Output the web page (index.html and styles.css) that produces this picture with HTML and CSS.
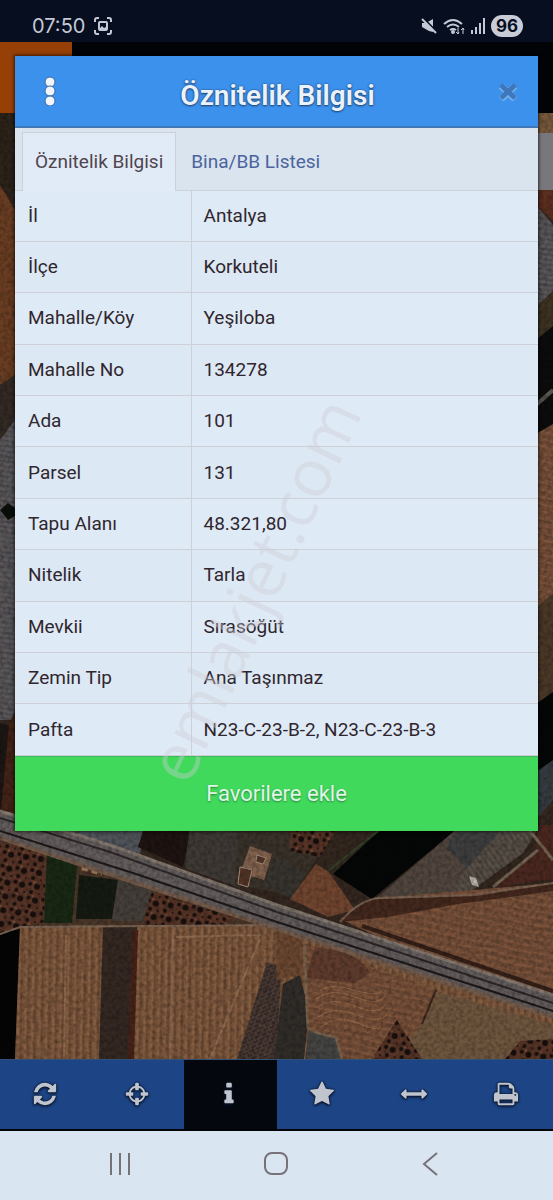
FILE: index.html
```html
<!DOCTYPE html>
<html lang="tr">
<head>
  <meta charset="UTF-8" />
  <meta name="viewport" content="width=device-width, initial-scale=1.0"/>
  <title>Öznitelik Bilgisi</title>
  <link rel="stylesheet" href="styles.css">
</head>
<body>
  <header class="status-bar">
    <span class="clock">07:50</span>
    <svg class="shot-icon" viewBox="0 0 18 18" width="18" height="18" fill="none" stroke="currentColor" stroke-width="2">
      <path d="M1 5V3q0-2 2-2h2M13 1h2q2 0 2 2v2M17 13v2q0 2-2 2h-2M5 17H3q-2 0-2-2v-2"/>
      <rect x="5" y="5" width="8" height="8" rx="1"/>
      <path d="M5 12l3-3 2 2 2-1v3H5z" fill="currentColor" stroke="none"/>
    </svg>
    <div class="status-right">
      <svg viewBox="0 0 16 16" width="16" height="16" fill="currentColor">
        <path d="M1 5h4l7-4v13l-4-1-7-4z"/>
        <path d="M2 0l14 14" stroke="#070e1f" stroke-width="2"/>
        <path d="M1 1l14 14" stroke="currentColor" stroke-width="2"/>
      </svg>
      <svg viewBox="0 0 22 17" width="22" height="17" fill="none" stroke="currentColor" stroke-width="2">
        <path d="M1 6q9-8 18 0M4 9q6-5 12 0M7 12q3-2 6 0"/>
        <circle cx="10" cy="14" r="1"/>
        <path d="M15 10v6M13 14l2 2 1-2M20 16v-6M18 12l2-2 1 2" stroke-width="1"/>
      </svg>
      <svg viewBox="0 0 14 16" width="14" height="16" fill="currentColor">
        <path d="M0 12h2v4H0zM4 9h2v7H4zM8 5h2v11H8zM12 0h2v16h-2z"/>
      </svg>
      <span class="battery">96</span>
    </div>
  </header>

  <main class="map">
    <svg class="map-canvas" viewBox="0 42 553 1017" preserveAspectRatio="xMidYMin slice" aria-hidden="true">
      <defs>
        <pattern id="furrow" width="7" height="40" patternUnits="userSpaceOnUse" patternTransform="rotate(1)">
          <rect width="7" height="40" fill="#7a553b"/>
          <path d="M1 0v40" stroke="#93694b"/>
          <path d="M4 0v40" stroke="#5f402c"/>
        </pattern>
        <pattern id="furrow-h" width="60" height="7" patternUnits="userSpaceOnUse" patternTransform="rotate(12)">
          <rect width="60" height="7" fill="#744e38"/>
          <path d="M0 2q15-2 30 0t30 0" stroke="#86593e" fill="none"/>
          <path d="M0 5h60" stroke="#684532"/>
        </pattern>
        <pattern id="rows" width="5" height="20" patternUnits="userSpaceOnUse" patternTransform="rotate(-35)">
          <rect width="5" height="20" fill="#504840"/>
          <path d="M1 0v20" stroke="#645c53"/>
        </pattern>
        <pattern id="stripes" width="20" height="5" patternUnits="userSpaceOnUse" patternTransform="rotate(8)">
          <rect width="20" height="5" fill="#5b585b"/>
          <path d="M0 1h20" stroke="#454246"/>
        </pattern>
        <pattern id="shrubs" width="15" height="14" patternUnits="userSpaceOnUse" patternTransform="rotate(8)">
          <rect width="15" height="14" fill="#573426"/>
          <g fill="#170f0d"><circle cx="3" cy="3" r="2"/><circle cx="10" cy="5" r="3"/><circle cx="5" cy="11" r="2"/><circle cx="13" cy="12" r="1"/></g>
          <circle cx="7" cy="1" r="1" fill="#825545"/>
        </pattern>
        <pattern id="orchard" width="5" height="5" patternUnits="userSpaceOnUse" patternTransform="rotate(22)">
          <rect width="5" height="5" fill="#4b3b35"/>
          <path d="M0 1h3M2 4h2" stroke="#231b1a"/>
        </pattern>
        <filter id="grain" x="0" y="0" width="100%" height="100%">
          <feTurbulence type="fractalNoise" baseFrequency=".25" numOctaves="3" seed="4"/>
          <feColorMatrix values="0 0 0 0 0  0 0 0 0 0  0 0 0 0 0  1.4 0 0 0 -.5"/>
        </filter>
      </defs>
      <rect y="42" width="553" height="1017" fill="#33271f"/>

      <!-- west edge -->
      <path d="M0 113h20v80H0z" fill="#2c2319"/>
      <path d="M0 185l15 25v165L0 388z" fill="#693d22"/>
      <path d="M0 385l15-10v50L0 450z" fill="#332a24"/>
      <path d="M0 440l15-20v300H0z" fill="url(#stripes)"/>
      <path d="M0 510l8-7 7 5v8l-7 4z" fill="#0a0f0b"/>
      <path d="M0 723l12 3v85H0z" fill="#1d1714"/>
      <path d="M9 725l8-20v115H0z" fill="#442318"/>

      <!-- east edge -->
      <path d="M536 113h17v80h-17z" fill="#76583c"/>
      <path d="M536 190h17v30l-17-15z" fill="#5b2f20"/>
      <path d="M536 205l17 20v66l-17 16z" fill="url(#stripes)"/>
      <path d="M536 306l17-14v35l-17 14z" fill="#3c3223"/>
      <path d="M536 340l17-14v98l-17 12z" fill="#0b0c0b"/>
      <path d="M536 405l17-15" stroke="#5a5650" stroke-width="4"/>
      <path d="M536 434l17-10v170l-17 14z" fill="url(#furrow-h)"/>
      <path d="M536 608l17-14v98l-17 12z" fill="#4a3827"/>
      <path d="M536 704l17-12v70l-17 10z" fill="#050606"/>
      <path d="M536 772l17-12v40l-17 20z" fill="#353c40"/>

      <!-- plots north of the road -->
      <path d="M15 825h130l-5 30z" fill="#50545a"/>
      <path d="M145 825h46l-8 42-45-20z" fill="#1e1411"/>
      <path d="M190 825h60l-10 63-55-20z" fill="#3e3934"/>
      <path d="M238 825h100l-45 70-58-10z" fill="#39322a"/>
      <path d="M290 827h48l-18 30-30-6z" fill="url(#shrubs)"/>
      <path d="M250 846l22 8-8 26-24-7z" fill="#80614d"/>
      <path d="M240 867l12 3-4 17-10-3zM257 855l9 3-3 6-7-2z" fill="#523326" stroke="#a4917e"/>
      <path d="M276 859l30 14-14 26-30-14z" fill="#37342f"/>
      <path d="M382 828h76l-86 71-39-25z" fill="#050706"/>
      <path d="M382 828l-54 43" stroke="#304327" stroke-width="2"/>
      <path d="M458 828l-85 73 74-5 24-27-20-27z" fill="#51463e"/>
      <path d="M458 828l-12 20 21 20 36-40z" fill="#3f3e3f"/>
      <path d="M503 828h35l-15 25-60 44h-16l20-29z" fill="url(#rows)"/>
      <path d="M538 825h15v54l-56 8 39-35z" fill="#4a2820"/>
      <path d="M530 831l23 29M538 850l-45 37" stroke="#746352" stroke-width="3"/>
      <path d="M469 876l7 2 3 9-7-2z" fill="#b7b2a7"/>
      <path d="M316 864l13 8 26 38-27 7-38-18z" fill="#70452f"/>
      <path d="M340 919l30-20 183-16v119L385 940z" fill="url(#furrow-h)"/>
      <path d="M340 922q20-23 40-23l97-3 76-12v7l-95 13-70 13z" fill="#43281d"/>
      <path d="M340 922q20-23 40-24l90-3 83-12" fill="none" stroke="#796151" stroke-width="2"/>
      <path d="M362 926l191 65" stroke="#342018" stroke-width="4"/>

      <!-- plots south of the road -->
      <path d="M0 836l133 44 140 46-10 4-263 5z" fill="#4a3629"/>
      <path d="M0 842l46 10-2 70-44 11z" fill="url(#shrubs)"/>
      <path d="M47 854l30 12-5 57H44z" fill="#192814"/>
      <path d="M79 875l39 5-6 39H76z" fill="#151b12"/>
      <path d="M118 880l34 11-10 30h-30z" fill="#453f3a"/>
      <path d="M152 891l83 27-14 9h-79z" fill="url(#shrubs)"/>
      <path d="M82 868l20 6" stroke="#9b7758" stroke-width="4" stroke-dasharray="6 4"/>
      <path d="M0 932l20-3-5 130H0z" fill="#050505"/>
      <path d="M20 926l257-1 276 90v44H15z" fill="url(#furrow)"/>
      <path d="M103 927h34l-4 132h-34z" fill="#342822"/>
      <path d="M135 930l-4 129" stroke="#462319" stroke-width="6"/>
      <path d="M66 935l-2 124M173 930l-3 129M176 937l85-2M260 939l-50 120" stroke="#8c684d" stroke-width="2" fill="none"/>
      <path d="M267 962l14 5-4 92h-40z" fill="url(#orchard)"/>
      <path d="M277 925l29 18-6 32-24 5z" fill="#6a4730"/>
      <path d="M283 984l17-9 9 38-5 46h-30z" fill="#302d29"/>
      <path d="M304 943l132 47-16 38-45 31h-35l-32-27z" fill="url(#furrow-h)"/>
      <path d="M315 947q45 4 55 26l-15 10-50-5z" fill="#5e3b2d"/>
      <path d="M320 990q12-7 34 0t28 1M316 999q15-12 39-2t30-1M316 1008q15-12 39-2t30-1M318 1017q15-12 39-2t30-1M322 1026q15-12 38-2t20-1" fill="none" stroke="#966a49"/>
      <path d="M438 992l115 32v35H400l18-30z" fill="#6e553e"/>
      <path d="M397 1020l25 39h-50z" fill="url(#shrubs)"/>
      <path d="M505 1059l15-18 33-2v20z" fill="url(#shrubs)"/>
      <path d="M309 1029l27 8 5 22h-36z" fill="#444443"/>
      <path d="M304 942l4 85q4 6 28 10l6 22" fill="none" stroke="#79604a" stroke-width="3"/>
      <path d="M0 934l20-7 257-2" fill="none" stroke="#7c6553" stroke-width="2"/>
      <path d="M436 990l-14 34" stroke="#3b271e" stroke-width="2"/>

      <!-- the road -->
      <path d="M0 812l110 33 167 60 276 90v22l-276-88-144-47L0 838z" fill="#625c5b"/>
      <path d="M0 811l110 34 167 60 276 90" fill="none" stroke="#83776e" stroke-width="3"/>
      <path d="M0 818l110 34 167 60 276 91" fill="none" stroke="#2e2729" stroke-width="2"/>
      <path d="M0 831l133 42 144 49 276 89" fill="none" stroke="#1f191a" stroke-width="2"/>
      <path d="M0 838l133 44 144 47 276 88" fill="none" stroke="#725b4b" stroke-width="4"/>
      <rect y="113" width="553" height="946" filter="url(#grain)" opacity=".4"/>

      <!-- app header and corner button behind the dialog -->
      <path d="M0 42h553v71H0z" fill="#020307"/>
      <path d="M0 42h72v71H0z" fill="#963f07"/>
      <path d="M536 133h17v57h-17z" fill="#77777c"/>
    </svg>

    <section class="dialog" role="dialog" aria-labelledby="dialog-title">
      <div class="dialog-header">
        <button class="icon-btn menu-btn" type="button" aria-label="Menü">
          <svg viewBox="0 0 14 30" width="14" height="30" fill="#f2f6fc" stroke="#3568a6">
            <circle cx="7" cy="6" r="5"/><circle cx="7" cy="15" r="5"/><circle cx="7" cy="25" r="5"/>
          </svg>
        </button>
        <h1 id="dialog-title">Öznitelik Bilgisi</h1>
        <button class="icon-btn close-btn" type="button" aria-label="Kapat">
          <svg viewBox="0 0 20 20" width="20" height="20" fill="none">
            <path d="M3 5l14 13M17 5L3 18" stroke="#75aeea" stroke-width="7"/>
            <path d="M3 4l14 13M17 4L3 17" stroke="#3f77bd" stroke-width="5"/>
          </svg>
        </button>
      </div>
      <div class="tabs" role="tablist">
        <button class="tab active" type="button" role="tab" aria-selected="true">Öznitelik Bilgisi</button>
        <button class="tab" type="button" role="tab" aria-selected="false">Bina/BB Listesi</button>
      </div>
      <table class="info-table">
        <tbody>
          <tr><th scope="row">İl</th><td>Antalya</td></tr>
          <tr><th scope="row">İlçe</th><td>Korkuteli</td></tr>
          <tr><th scope="row">Mahalle/Köy</th><td>Yeşiloba</td></tr>
          <tr><th scope="row">Mahalle No</th><td>134278</td></tr>
          <tr><th scope="row">Ada</th><td>101</td></tr>
          <tr><th scope="row">Parsel</th><td>131</td></tr>
          <tr><th scope="row">Tapu Alanı</th><td>48.321,80</td></tr>
          <tr><th scope="row">Nitelik</th><td>Tarla</td></tr>
          <tr><th scope="row">Mevkii</th><td>Sırasöğüt</td></tr>
          <tr><th scope="row">Zemin Tip</th><td>Ana Taşınmaz</td></tr>
          <tr><th scope="row">Pafta</th><td>N23-C-23-B-2, N23-C-23-B-3</td></tr>
        </tbody>
      </table>
      <button class="fav-btn" type="button">Favorilere ekle</button>
      <div class="watermark">emlakjet.com</div>
    </section>
  </main>

  <nav class="toolbar">
    <button class="tool" type="button" aria-label="Yenile">
      <svg viewBox="0 0 1792 1792"><path d="M1639 1056q0 5-1 7-64 268-268 434.5t-478 166.5q-146 0-282.5-55t-243.5-157l-129 129q-19 19-45 19t-45-19-19-45v-448q0-26 19-45t45-19h448q26 0 45 19t19 45-19 45l-137 137q71 66 161 102t187 36q134 0 250-65t186-179q11-17 53-117 8-23 30-23h192q13 0 22.5 9.5t9.5 22.5zm25-800v448q0 26-19 45t-45 19h-448q-26 0-45-19t-19-45 19-45l138-138q-148-137-349-137-134 0-250 65t-186 179q-11 17-53 117-8 23-30 23h-199q-13 0-22.5-9.5t-9.5-22.5v-7q65-268 270-434.5t480-166.5q146 0 284 55.5t245 156.5l130-129q19-19 45-19t45 19 19 45z"/></svg>
    </button>
    <button class="tool" type="button" aria-label="Konum">
      <svg viewBox="0 0 1792 1792"><path d="M1325 1024h-109q-26 0-45-19t-19-45v-128q0-26 19-45t45-19h109q-32-108-112.5-188.5t-188.5-112.5v109q0 26-19 45t-45 19h-128q-26 0-45-19t-19-45v-109q-108 32-188.5 112.5t-112.5 188.5h109q26 0 45 19t19 45v128q0 26-19 45t-45 19h-109q32 108 112.5 188.5t188.5 112.5v-109q0-26 19-45t45-19h128q26 0 45 19t19 45v109q108-32 188.5-112.5t112.5-188.5zm339-192v128q0 26-19 45t-45 19h-143q-37 161-154.5 278.5t-278.5 154.5v143q0 26-19 45t-45 19h-128q-26 0-45-19t-19-45v-143q-161-37-278.5-154.5t-154.5-278.5h-143q-26 0-45-19t-19-45v-128q0-26 19-45t45-19h143q37-161 154.5-278.5t278.5-154.5v-143q0-26 19-45t45-19h128q26 0 45 19t19 45v143q161 37 278.5 154.5t154.5 278.5h143q26 0 45 19t19 45z"/></svg>
    </button>
    <button class="tool active" type="button" aria-label="Bilgi">
      <svg viewBox="0 0 1792 1792"><path d="M1216 1344v128q0 26-19 45t-45 19h-512q-26 0-45-19t-19-45v-128q0-26 19-45t45-19h64v-384h-64q-26 0-45-19t-19-45v-128q0-26 19-45t45-19h384q26 0 45 19t19 45v576h64q26 0 45 19t19 45zm-128-1152v192q0 26-19 45t-45 19h-256q-26 0-45-19t-19-45v-192q0-26 19-45t45-19h256q26 0 45 19t19 45z"/></svg>
    </button>
    <button class="tool" type="button" aria-label="Favoriler">
      <svg viewBox="0 0 1792 1792"><path d="M1728 647q0 22-26 48l-363 354 86 500q1 7 1 20 0 21-10.5 35.5t-30.5 14.5q-19 0-40-12l-449-236-449 236q-22 12-40 12-21 0-31.5-14.5t-10.5-35.5q0-6 2-20l86-500-364-354q-25-27-25-48 0-37 56-46l502-73 225-455q19-41 49-41t49 41l225 455 502 73q56 9 56 46z"/></svg>
    </button>
    <button class="tool" type="button" aria-label="Ölçüm">
      <svg viewBox="0 0 1792 1792"><path d="M1792 896q0 26-19 45l-256 256q-19 19-45 19t-45-19-19-45v-128h-1024v128q0 26-19 45t-45 19-45-19l-256-256q-19-19-19-45t19-45l256-256q19-19 45-19t45 19 19 45v128h1024v-128q0-26 19-45t45-19 45 19l256 256q19 19 19 45z"/></svg>
    </button>
    <button class="tool" type="button" aria-label="Yazdır">
      <svg viewBox="0 0 1792 1792"><path d="M448 1536h896v-256h-896v256zm0-640h896v-384h-160q-40 0-68-28t-28-68v-160h-640v640zm1152 64q0-26-19-45t-45-19-45 19-19 45 19 45 45 19 45-19 19-45zm128 0v416q0 13-9.5 22.5t-22.5 9.5h-224v160q0 40-28 68t-68 28h-960q-40 0-68-28t-28-68v-160h-224q-13 0-22.5-9.5t-9.5-22.5v-416q0-79 56.5-135.5t135.5-56.5h64v-544q0-40 28-68t68-28h672q40 0 88 20t76 48l152 152q28 28 48 76t20 88v256h64q79 0 135.5 56.5t56.5 135.5z"/></svg>
    </button>
  </nav>

  <nav class="system-nav">
    <button class="icon-btn" type="button" aria-label="Son uygulamalar">
      <svg viewBox="0 0 24 24" width="24" height="24"><path d="M3 1v22M12 1v22M21 1v22"/></svg>
    </button>
    <button class="icon-btn" type="button" aria-label="Ana ekran">
      <svg viewBox="0 0 24 24" width="24" height="24"><rect x="1" y="1" width="22" height="21" rx="7"/></svg>
    </button>
    <button class="icon-btn" type="button" aria-label="Geri">
      <svg viewBox="0 0 24 24" width="24" height="24"><path d="M18 1L5 12l13 11"/></svg>
    </button>
  </nav>
</body>
</html>
```
FILE: styles.css
```css
:root {
  --bar: #070e1f;
  --header: #3c91ec;
  --panel: #dfeaf7;
  --panel-alt: #dce8f4;
  --line: #ced0d7;
  --text: #30262d;
  --link: #4b639d;
  --green: #40d95b;
  --tool: #1d4484;
  --icon: #c3c9d5;
}
* { box-sizing: border-box; }
body {
  margin: 0;
  min-height: 100vh;
  display: flex;
  flex-direction: column;
  background: #000;
  color: var(--text);
  font-family: Roboto, "Liberation Sans", sans-serif;
  font-size: 19px;
}
button {
  border: none;
  background: none;
  padding: 0;
  font: inherit;
  color: inherit;
  cursor: pointer;
}
svg { display: block; }

.status-bar {
  display: flex;
  align-items: center;
  height: 42px;
  padding: 10px 30px 0 32px;
  background: var(--bar);
  color: var(--icon);
  font-family: Inter, Roboto, sans-serif;
}
.clock {
  font-size: 20px;
  line-height: 32px;
}
.shot-icon { margin-left: 9px; }
.status-right {
  display: flex;
  align-items: center;
  gap: 6px;
  margin-left: auto;
}
.battery {
  width: 32px;
  border-radius: 11px;
  background: #c9ccd6;
  color: var(--bar);
  font-size: 17px;
  font-weight: 700;
  line-height: 22px;
  text-align: center;
}

.map {
  position: relative;
  flex: 1;
  padding: 14px 15px 228px;
}
.map-canvas {
  position: absolute;
  inset: 0;
  width: 100%;
  height: 100%;
}
.dialog {
  position: relative;
  background: var(--panel);
  box-shadow: 0 0 3px 1px rgba(0,0,0,0.6);
}
.dialog-header {
  display: flex;
  align-items: center;
  justify-content: space-between;
  height: 72px;
  padding: 0 20px 0 28px;
  background: var(--header);
  border-bottom: 2px solid #4077b5;
}
.dialog-header h1 {
  margin: 0;
  padding-top: 9px;
  color: #eaf2fc;
  font-size: 28px;
  font-weight: 600;
  line-height: 32px;
  text-shadow: 0 0 2px #23456f, 0 1px 2px #23456f;
}

.tabs {
  display: flex;
  height: 63px;
  padding: 4px 7px 0;
  background: #dae4ef;
  border-bottom: 1px solid var(--line);
}
.tab {
  padding: 0 15px;
  color: var(--link);
}
.tab.active {
  padding: 0 12px 2px;
  margin-bottom: -1px;
  background: #e1ebf7;
  border: 1px solid var(--line);
  border-bottom: none;
  color: #50444d;
}

.info-table {
  width: 100%;
  height: 565px;
  border-collapse: collapse;
  table-layout: fixed;
  line-height: 22px;
}
.info-table th,
.info-table td {
  padding: 0 12px;
  border-bottom: 1px solid var(--line);
  font-weight: 400;
  text-align: left;
}
.info-table th {
  width: 176px;
  padding-left: 13px;
  border-right: 1px solid var(--line);
}
.info-table tr:nth-child(even) { background: var(--panel-alt); }

.fav-btn {
  display: block;
  width: 100%;
  height: 75px;
  padding-bottom: 2px;
  background: var(--green);
  border-top: 1px solid #43b65b;
  color: #e0f5e7;
  font-size: 22px;
  text-shadow: 0 1px 2px #26863a;
}
.watermark {
  position: absolute;
  top: 533px;
  left: 50%;
  transform: translate(-56%, -50%) rotate(-65deg);
  color: rgba(205,206,212,0.4);
  font-family: "Open Sans", sans-serif;
  font-size: 66px;
  line-height: 80px;
  white-space: nowrap;
  pointer-events: none;
}

.toolbar {
  display: flex;
  height: 72px;
  background: var(--tool);
  border-top: 1px solid #315174;
  border-bottom: 2px solid #020409;
}
.tool {
  flex: 1;
  display: flex;
  align-items: center;
  justify-content: center;
  padding: 0 2px 2px 0;
}
.tool.active { background: #04070e; }
.tool svg {
  width: 26px;
  height: 26px;
  fill: #c0c4cd;
  filter: drop-shadow(0 0 1px #07142d) drop-shadow(0 1px 1px #07142d);
}

.system-nav {
  display: flex;
  align-items: center;
  justify-content: space-between;
  height: 69px;
  padding: 0 110px 4px 108px;
  background: #d9e5f1;
}
.system-nav svg {
  fill: none;
  stroke: #777279;
  stroke-width: 2;
}
```
